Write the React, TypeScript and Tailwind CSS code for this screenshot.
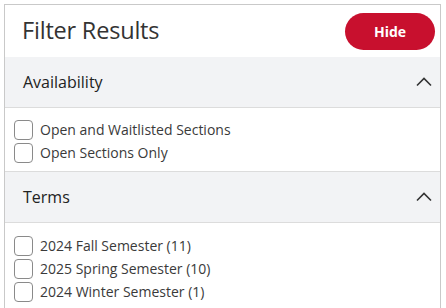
import React from "react";

function Chevron() {
  return (
    <svg width="16" height="10" viewBox="0 0 16 10" fill="none" className="block">
      <path d="M1 8.5L8 1.5l7 7" stroke="#333" strokeWidth="1.6" />
    </svg>
  );
}

function Box() {
  return <span className="block w-[19px] h-[20px] rounded-[4px] border border-[#8a8a8a] bg-white shrink-0" />;
}

function Row({ label }: { label: string }) {
  return (
    <label className="flex items-center gap-[7px] h-[23px]">
      <Box />
      <span className="text-[14px] text-[#3a3a3a] leading-none">{label}</span>
    </label>
  );
}

function SectionHeader({ title }: { title: string }) {
  return (
    <div className="flex items-center justify-between h-[51px] pl-[18px] pr-[8px] bg-[#f2f3f5] border-b border-[#dcdcdc]">
      <span className="text-[16px] text-[#222]">{title}</span>
      <Chevron />
    </div>
  );
}

export default function App() {
  return (
    <div className="w-[446px] h-[308px] overflow-hidden bg-white pt-[4px] pl-[4px]" style={{ fontFamily: '"Open Sans", sans-serif' }}>
      <div className="w-[437px] h-[320px] border border-[#c9c9c9] bg-white">
        <div className="flex items-center justify-between h-[52px] pl-[17px] pr-[5px]">
          <h1 className="text-[23.5px] text-[#333] leading-none tracking-[-0.2px]">Filter Results</h1>
          <button className="w-[90px] h-[37px] rounded-full bg-[#c8102e] text-white text-[14px] font-bold">Hide</button>
        </div>
        <SectionHeader title="Availability" />
        <div className="flex flex-col pt-[10px] pb-[7px] pl-[9px] border-b border-[#dcdcdc]">
          <Row label="Open and Waitlisted Sections" />
          <Row label="Open Sections Only" />
        </div>
        <SectionHeader title="Terms" />
        <div className="flex flex-col pt-[11px] pl-[9px]">
          <Row label="2024 Fall Semester (11)" />
          <Row label="2025 Spring Semester (10)" />
          <Row label="2024 Winter Semester (1)" />
        </div>
      </div>
    </div>
  );
}
